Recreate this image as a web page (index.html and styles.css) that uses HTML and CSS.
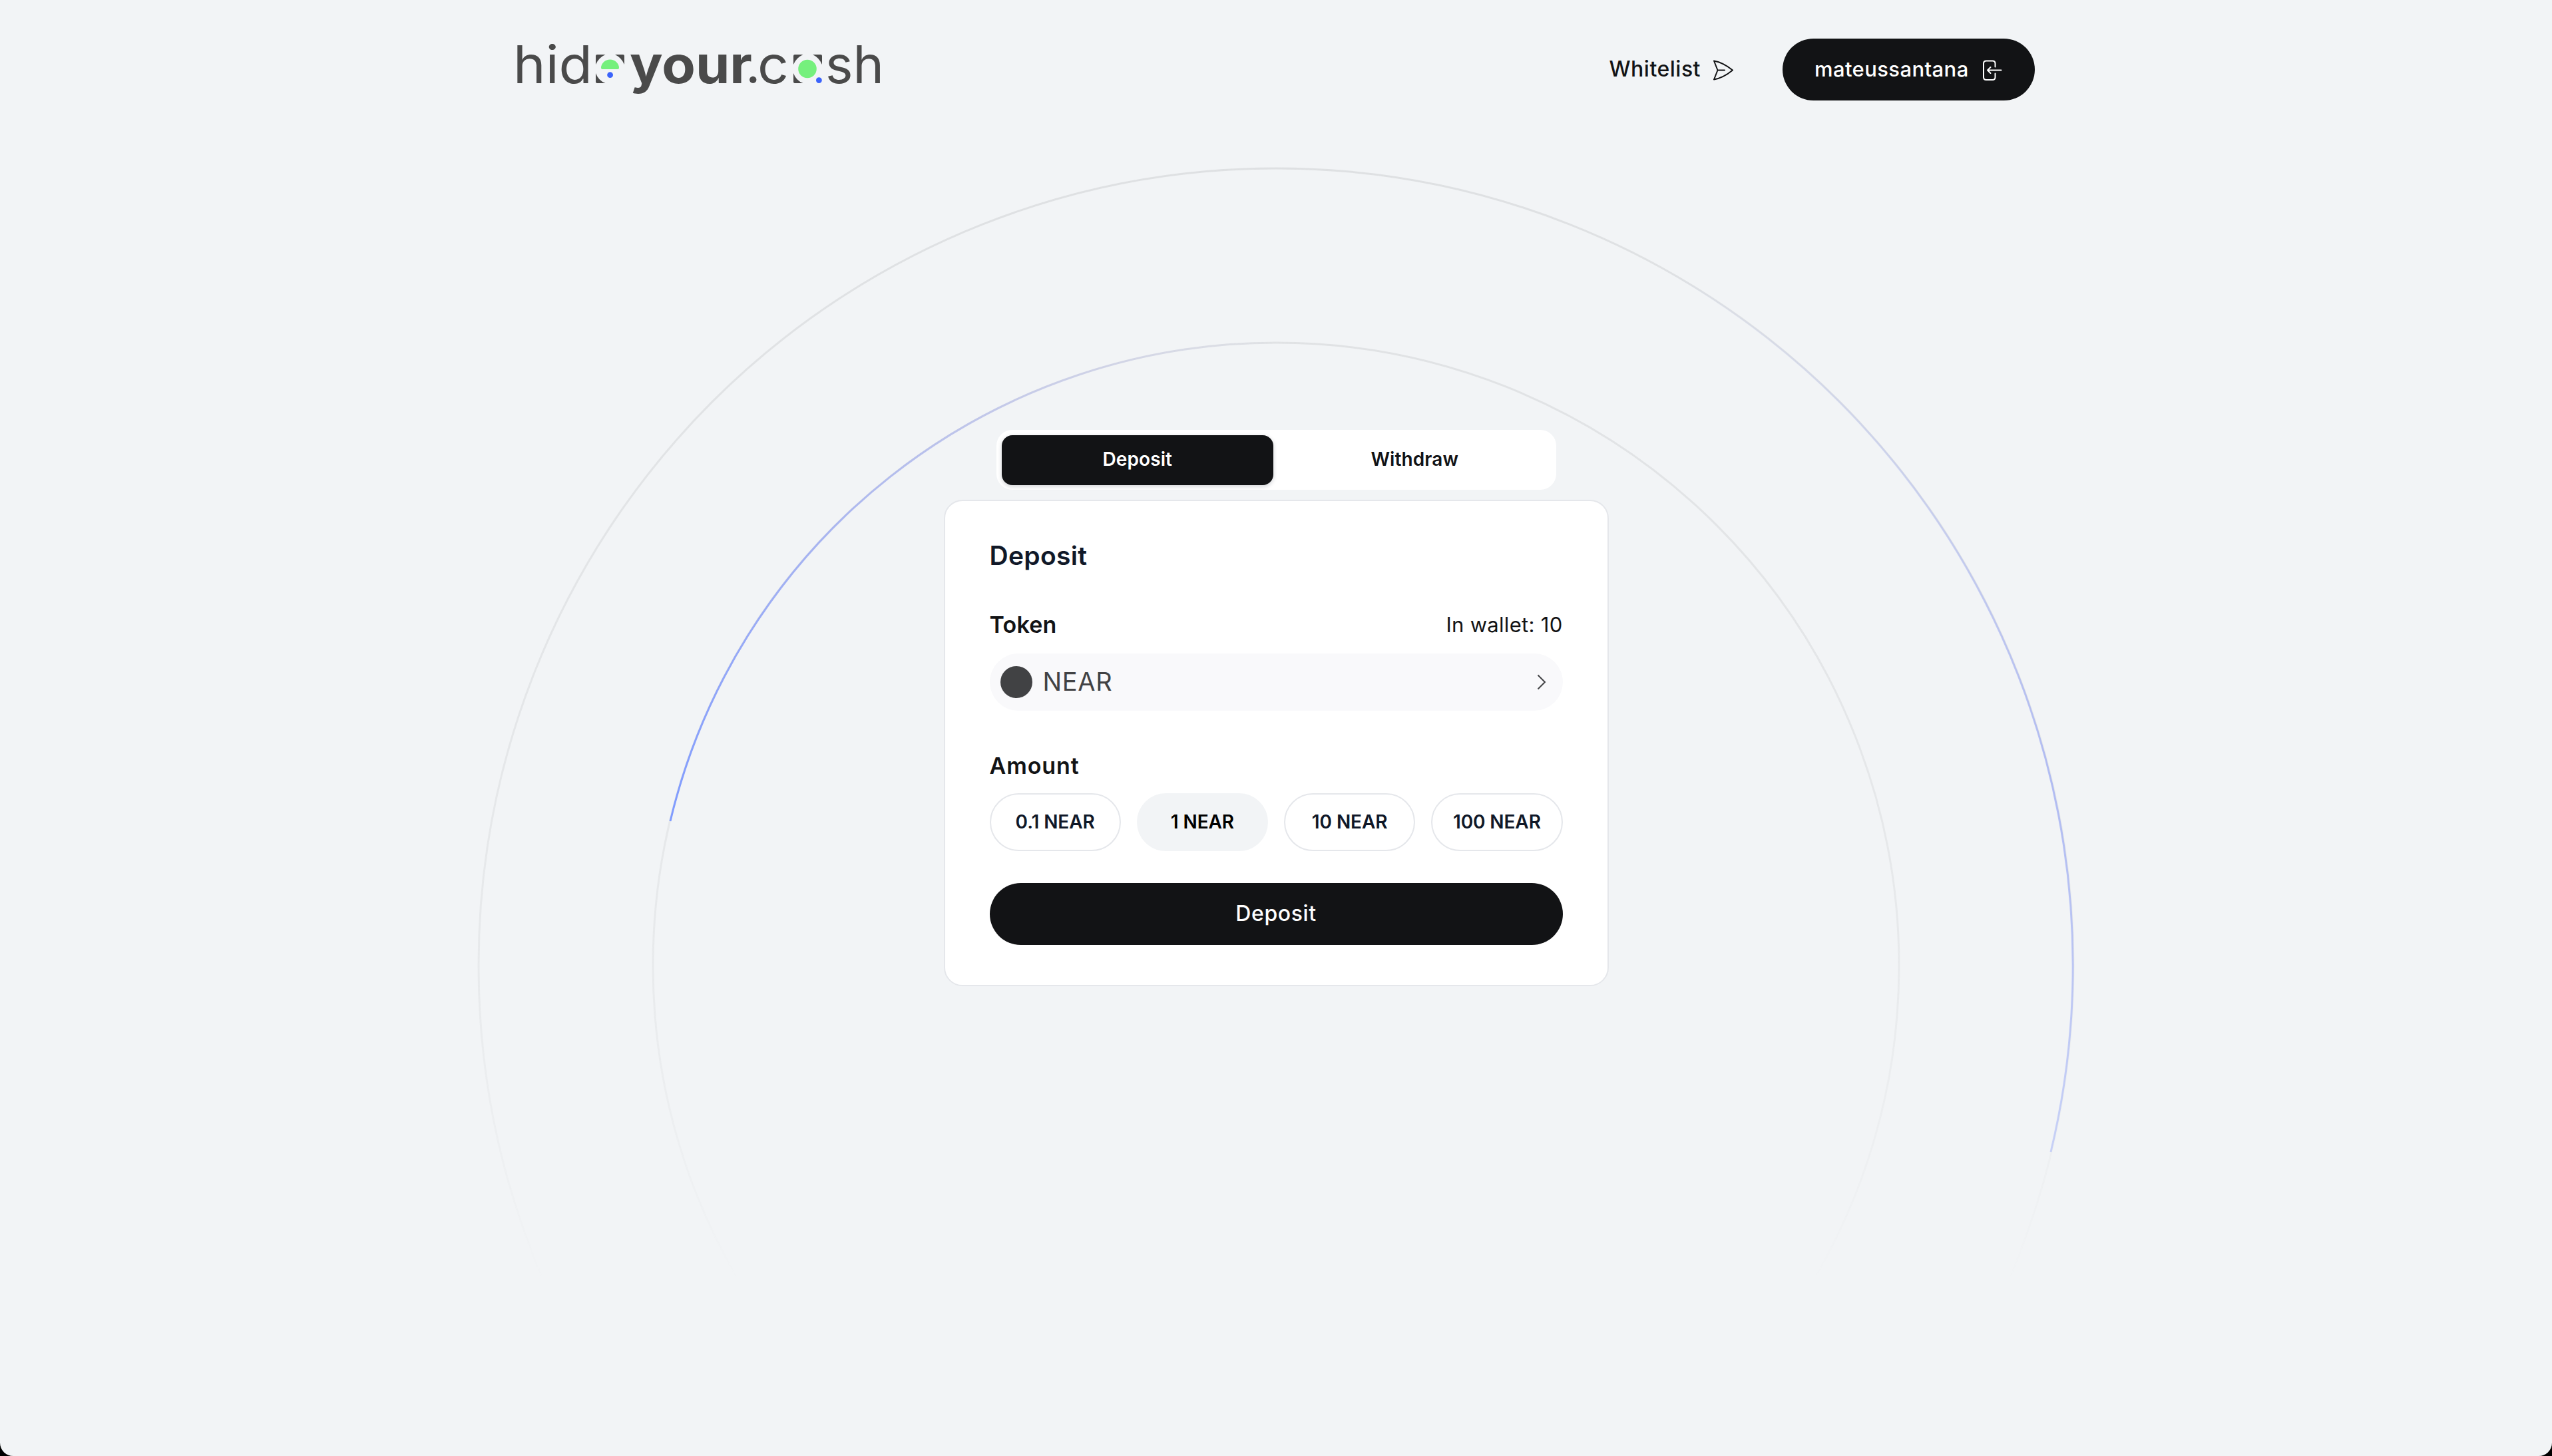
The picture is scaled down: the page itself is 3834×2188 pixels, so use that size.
FILE: index.html
```html
<!DOCTYPE html>
<html lang="en">
<head>
    <meta charset="UTF-8">
    <meta name="viewport" content="width=device-width, initial-scale=1.0">
    <title>hideyour.cash</title>
    <link rel="stylesheet" href="styles.css">
</head>
<body>
    <div class="window">
        <!-- background circles -->
        <svg class="circles" viewBox="0 0 3834 2188" fill="none">
            <defs>
                <linearGradient id="fade" gradientUnits="userSpaceOnUse" x1="0" y1="252" x2="0" y2="1940">
                    <stop offset="0" stop-color="#16181c" stop-opacity="0.09"/>
                    <stop offset="0.7" stop-color="#16181c" stop-opacity="0.048"/>
                    <stop offset="1" stop-color="#16181c" stop-opacity="0"/>
                </linearGradient>
                <linearGradient id="blueInner" gradientUnits="userSpaceOnUse" x1="1007" y1="1233" x2="1917" y2="514">
                    <stop offset="0" stop-color="#7f9bff"/>
                    <stop offset="1" stop-color="#8c90e8" stop-opacity="0"/>
                </linearGradient>
                <linearGradient id="blueOuter" gradientUnits="userSpaceOnUse" x1="2500" y1="400" x2="3081" y2="1730">
                    <stop offset="0" stop-color="#8c9cf5" stop-opacity="0"/>
                    <stop offset="0.65" stop-color="#8c9cf5" stop-opacity="0.6"/>
                    <stop offset="1" stop-color="#8ca0fb" stop-opacity="0.4"/>
                </linearGradient>
            </defs>
            <g stroke-width="3">
                <circle cx="1917" cy="1451" r="1198" stroke="url(#fade)"/>
                <circle cx="1917" cy="1451" r="936" stroke="url(#fade)"/>
                <path d="M1007 1234A936 936 0 0 1 1917 515" stroke="url(#blueInner)"/>
                <path d="M1917 253A1198 1198 0 0 1 3081 1731" stroke="url(#blueOuter)"/>
            </g>
        </svg>

        <header class="header">
            <svg class="logo" viewBox="0 0 550 80">
                <g class="logo-text">
                    <text x="-6" y="60" textLength="119" lengthAdjust="spacingAndGlyphs">hid</text>
                    <text class="bold" x="169" y="60" textLength="184" lengthAdjust="spacingAndGlyphs">your</text>
                    <text x="343" y="60">.</text>
                    <text x="361" y="60" textLength="47" lengthAdjust="spacingAndGlyphs">c</text>
                    <text x="463" y="60" textLength="88" lengthAdjust="spacingAndGlyphs">sh</text>
                </g>
                <g fill="#4a4a4a">
                    <path d="M120 17H132.500Q122 22 118 32V19Q118 17 120 17ZM147 17H159Q161 17 161 19V32Q157 22 147 17ZM118 45Q122 56 132.500 60H120Q118 60 118 58Z"/>
                    <path d="M417 17H429.500Q419 22 415 32V19Q415 17 417 17ZM444 17H456Q458 17 458 19V32Q454 22 444 17ZM415 45Q419 56 429.500 60H417Q415 60 415 58Z"/>
                </g>
                <path d="M126 37A13.500 12.500 0 0 1 153 37Q153 39 151 39H128Q126 39 126 37Z" fill="#75f07d"/>
                <circle cx="436" cy="38.500" r="13.800" fill="#75f07d"/>
                <circle cx="139.600" cy="47.700" r="4.400" fill="#3b63fb"/>
                <circle cx="453.400" cy="55.600" r="4.400" fill="#3b63fb"/>
            </svg>
            <nav class="nav">
                <a class="whitelist">
                    <span>Whitelist</span>
                    <svg class="icon-send" viewBox="0 0 32 32"><path d="M2 2.500Q16 5 30 16.500Q16 28 2 30.500L7.500 16.500ZM7.500 16.500H18"/></svg>
                </a>
                <button class="account">
                    <span>mateussantana</span>
                    <svg class="icon-exit" viewBox="0 0 32 32"><path d="M20.500 11.500V6.500Q20.500 2.500 16.500 2.500H7Q3 2.500 3 6.500V27Q3 31 7 31H16.500Q20.500 31 20.500 27V21.500M29.500 16.500H9M13.500 12L9 16.500L13.500 21"/></svg>
                </button>
            </nav>
        </header>

        <main class="content">
            <div class="tabs">
                <button class="tab active">Deposit</button>
                <button class="tab">Withdraw</button>
            </div>
            <section class="card">
                <h2 class="title">Deposit</h2>
                <div class="row">
                    <span class="label token">Token</span>
                    <span class="wallet">In wallet: 10</span>
                </div>
                <div class="select">
                    <span class="coin"></span>
                    <span class="coin-name">NEAR</span>
                    <svg class="chevron" viewBox="0 0 14 24"><path d="M1.500 1.500L12 12L1.500 22.500"/></svg>
                </div>
                <span class="label amount">Amount</span>
                <div class="options">
                    <button class="option">0.1 NEAR</button>
                    <button class="option selected">1 NEAR</button>
                    <button class="option">10 NEAR</button>
                    <button class="option">100 NEAR</button>
                </div>
                <button class="submit">Deposit</button>
            </section>
        </main>
    </div>
</body>
</html>
```

FILE: styles.css
```css
* {
    margin: 0;
    padding: 0;
    box-sizing: border-box;
}
body {
    background: #000;
    font-family: "Inter", "Liberation Sans", sans-serif;
    color: #121315;
}
button {
    border: none;
    font-family: inherit;
    color: inherit;
}
.window {
    position: relative;
    height: 2188px;
    background: #f2f4f6;
    border-radius: 0 0 20px 20px;
    overflow: hidden;
}
.circles {
    position: absolute;
    inset: 0;
    width: 3834px;
    height: 2188px;
}

/* header */
.header {
    position: relative;
    width: 2280px;
    margin: 0 auto;
    padding-top: 58px;
    display: flex;
    justify-content: space-between;
}
.logo {
    width: 550px;
    height: 80px;
    margin-top: 7px;
    overflow: visible;
}
.logo-text {
    font-size: 78px;
    font-weight: 400;
    fill: #4a4a4a;
}
.logo-text .bold {
    font-weight: 700;
}
.nav {
    display: flex;
    align-items: center;
    height: 93px;
}
.nav span {
    padding-bottom: 2px;
}
.whitelist {
    display: flex;
    align-items: center;
    font-size: 32px;
    font-weight: 500;
    letter-spacing: 0.5px;
    margin-right: 73px;
}
.nav svg {
    width: 32px;
    height: 32px;
    fill: none;
    stroke: currentColor;
    stroke-width: 2;
    stroke-linecap: round;
    stroke-linejoin: round;
}
.icon-send {
    margin-left: 18px;
}
.account {
    width: 379px;
    height: 93px;
    border-radius: 47px;
    background: #121315;
    color: #fff;
    display: flex;
    align-items: center;
    justify-content: space-between;
    padding: 0 48px;
    font-size: 31px;
    font-weight: 500;
    letter-spacing: 0.4px;
}

/* deposit form */
.content {
    position: relative;
    display: flex;
    flex-direction: column;
    align-items: center;
    padding-top: 495px;
}
.tabs {
    width: 841px;
    height: 90px;
    padding: 8px;
    border-radius: 24px;
    background: #fff;
    display: flex;
    gap: 8px;
}
.tab {
    flex: 1;
    height: 75px;
    padding-bottom: 3px;
    border-radius: 16px;
    background: none;
    font-size: 28px;
    font-weight: 600;
    letter-spacing: 0.1px;
}
.tab.active {
    background: #121315;
    color: #fff;
    box-shadow: 0 2px 6px rgba(16, 24, 40, 0.2);
}
.card {
    width: 999px;
    height: 731px;
    margin-top: 15px;
    padding: 0 67px;
    border: 2px solid #e5e7eb;
    border-radius: 28px;
    background: #fff;
    display: flex;
    flex-direction: column;
}
.title {
    margin-top: 59px;
    font-size: 39px;
    line-height: 46px;
    font-weight: 600;
    letter-spacing: 0.3px;
    color: #101828;
}
.row {
    margin-top: 61px;
    display: flex;
    justify-content: space-between;
    align-items: center;
    line-height: 40px;
}
.label {
    font-size: 34px;
    line-height: 40px;
    font-weight: 600;
    letter-spacing: 0.2px;
}
.wallet {
    font-size: 31px;
    letter-spacing: 0.3px;
}
.select {
    margin-top: 23px;
    height: 86px;
    border-radius: 43px;
    background: #f9f9fb;
    display: flex;
    align-items: center;
    padding: 0 25px 0 16px;
    color: #414244;
}
.coin {
    width: 48px;
    height: 48px;
    border-radius: 50%;
    background: #414244;
}
.coin-name {
    margin-left: 16px;
    padding-bottom: 2px;
    font-size: 38px;
    letter-spacing: 0.7px;
}
.chevron {
    width: 14px;
    height: 24px;
    margin-left: auto;
    fill: none;
    stroke: #414244;
    stroke-width: 2;
}
.amount {
    margin-top: 63px;
    letter-spacing: 0.9px;
}
.options {
    margin-top: 21px;
    display: grid;
    grid-template-columns: repeat(4, 1fr);
    gap: 24px;
}
.option {
    height: 87px;
    padding-bottom: 2px;
    border: 2px solid #e5e7eb;
    border-radius: 44px;
    background: #fff;
    font-size: 28px;
    font-weight: 600;
    letter-spacing: -0.1px;
    color: #101828;
}
.option.selected {
    background: #f2f4f6;
    border-color: #f2f4f6;
    color: #000;
}
.submit {
    margin-top: 48px;
    height: 93px;
    padding-bottom: 3px;
    border-radius: 47px;
    background: #121315;
    color: #fff;
    font-size: 32px;
    font-weight: 500;
    letter-spacing: 0.6px;
}
```
